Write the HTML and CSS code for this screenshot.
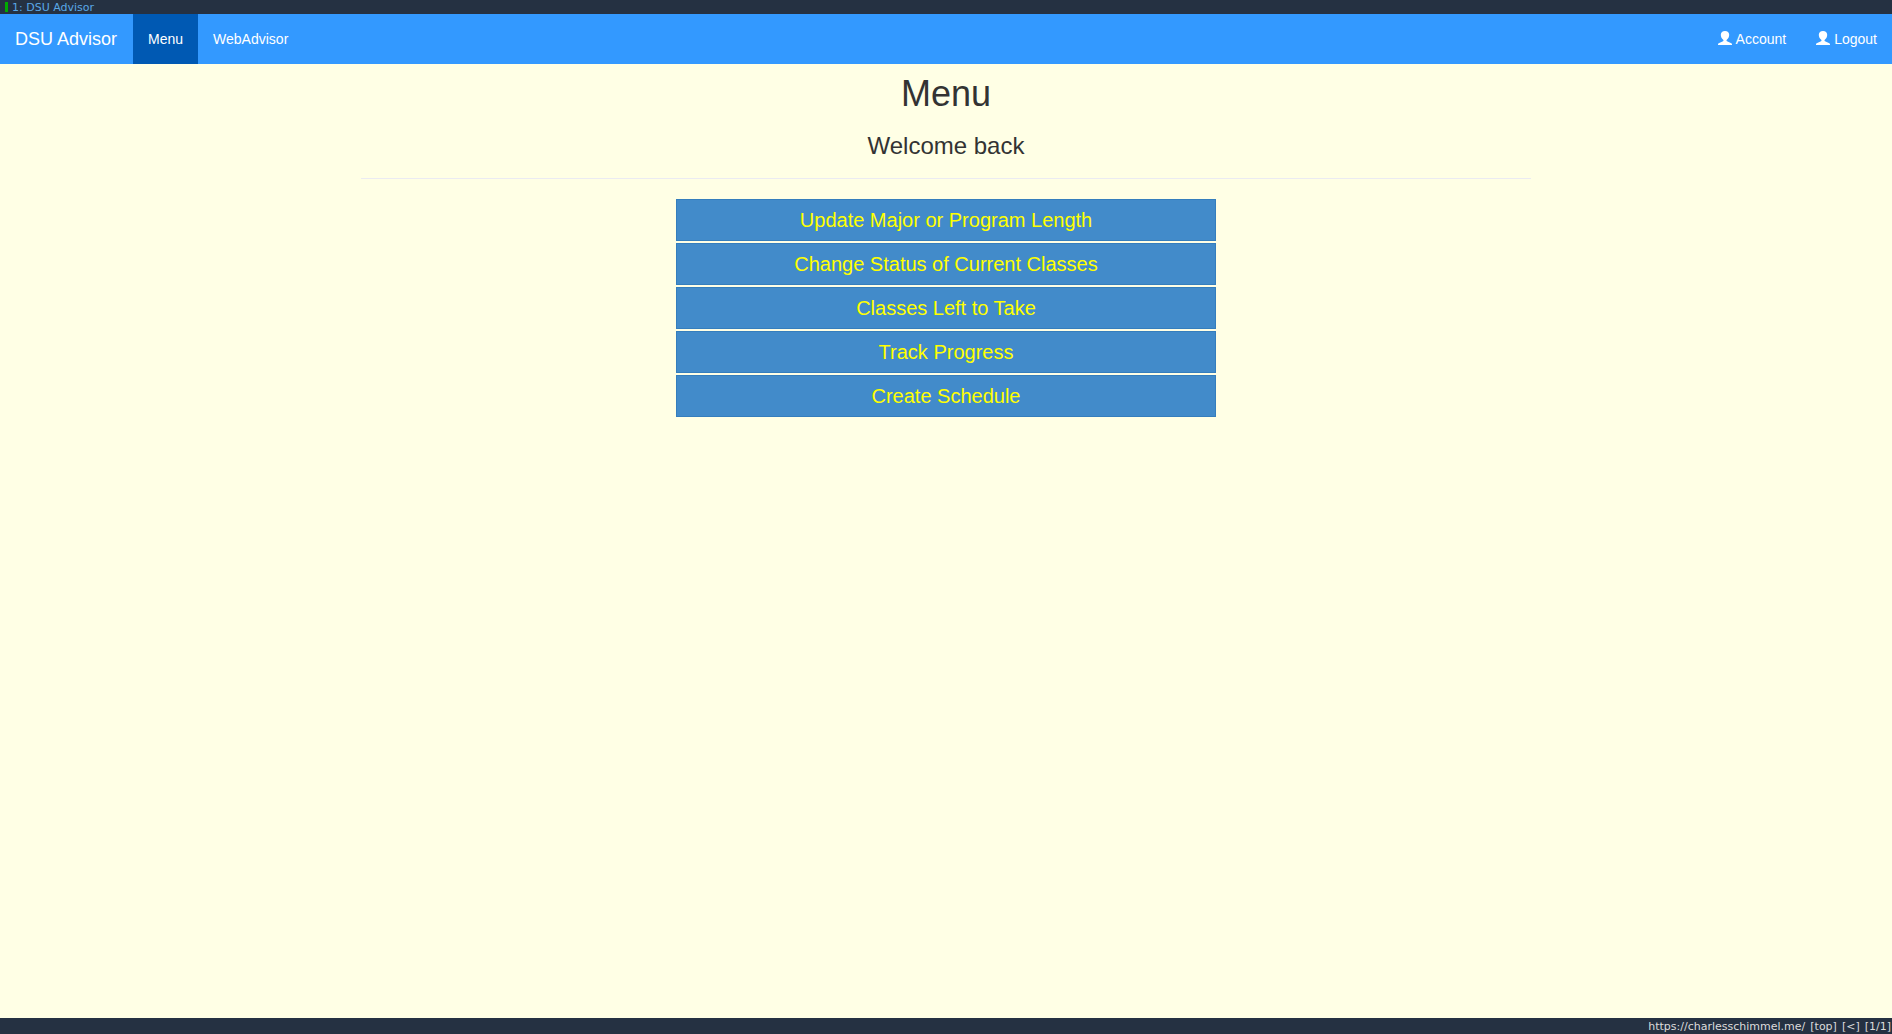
FILE: index.html
```html
<!DOCTYPE html>
<html lang="en">
<head>
<meta charset="utf-8">
<meta name="viewport" content="width=device-width, initial-scale=1">
<title>DSU Advisor</title>
<link rel="stylesheet" href="styles.css">
</head>
<body>
<div class="tab-bar"><span class="tab-indicator"></span><span>1: DSU Advisor</span></div>
<nav class="navbar">
  <a class="brand" href="#">DSU Advisor</a>
  <a class="nav-link active" href="#" aria-current="page">Menu</a>
  <a class="nav-link" href="#">WebAdvisor</a>
  <div class="nav-right">
    <a class="nav-link" href="#"><svg class="icon" viewBox="0 0 14 14" aria-hidden="true"><path d="M7 0C4.500 0 2.800 1.500 2.800 3.700c0 2 1 4 2.400 5.100.5.500.4 1.200-.2 1.500L1.200 11.900C.4 12.200 0 12.700 0 13.300V14h14v-.7c0-.6-.4-1.100-1.200-1.400L9 10.300c-.6-.3-.7-1-.2-1.500 1.400-1.100 2.400-3.100 2.400-5.100C11.200 1.500 9.500 0 7 0z"/></svg>Account</a>
    <a class="nav-link" href="#"><svg class="icon" viewBox="0 0 14 14" aria-hidden="true"><path d="M7 0C4.500 0 2.800 1.500 2.800 3.700c0 2 1 4 2.400 5.100.5.500.4 1.200-.2 1.500L1.200 11.900C.4 12.200 0 12.700 0 13.300V14h14v-.7c0-.6-.4-1.100-1.200-1.400L9 10.300c-.6-.3-.7-1-.2-1.500 1.400-1.100 2.400-3.100 2.400-5.100C11.200 1.500 9.500 0 7 0z"/></svg>Logout</a>
  </div>
</nav>
<main class="container">
  <h1>Menu</h1>
  <h3>Welcome back</h3>
  <hr>
  <div class="menu">
    <button class="menu-button" type="button">Update Major or Program Length</button>
    <button class="menu-button" type="button">Change Status of Current Classes</button>
    <button class="menu-button" type="button">Classes Left to Take</button>
    <button class="menu-button" type="button">Track Progress</button>
    <button class="menu-button" type="button">Create Schedule</button>
  </div>
</main>
<footer class="status-bar"><span>https://charlesschimmel.me/</span><span>[top]</span><span>[&lt;]</span><span>[1/1]</span></footer>
</body>
</html>
```
FILE: styles.css
```css
* {
  box-sizing: border-box;
}

body {
  display: flex;
  flex-direction: column;
  min-height: 100vh;
  margin: 0;
  background: #ffffe5;
  color: #333;
  font: 14px/20px "Liberation Sans", Arial, sans-serif;
}

.tab-bar,
.status-bar {
  display: flex;
  background: #253142;
  font: 11px/14px "DejaVu Sans", sans-serif;
}

.tab-bar {
  align-items: flex-start;
  gap: 4px;
  padding: 1px 0 0 5px;
  color: #5aa8e6;
  line-height: 13px;
}

.tab-indicator {
  width: 3px;
  height: 10px;
  margin-top: 1px;
  background: #00aa00;
}

.status-bar {
  justify-content: flex-end;
  gap: 5px;
  padding: 2px 1px 0 0;
  color: #dcdcdc;
}

.navbar {
  display: flex;
  background: #3399ff;
}

.brand,
.nav-link {
  display: flex;
  align-items: center;
  padding: 15px;
  color: #fff;
  text-decoration: none;
}

.brand {
  padding-right: 16px;
  font-size: 18px;
}

.active {
  background: #0059b3;
}

.nav-right {
  display: flex;
  margin-left: auto;
}

.icon {
  width: 14px;
  height: 14px;
  margin-right: 4px;
  margin-bottom: 2px;
  fill: currentColor;
}

.container {
  flex: 1;
  width: 100%;
  max-width: 1170px;
  margin: 0 auto;
  padding-top: 10px;
  text-align: center;
}

h1,
h3 {
  margin: 0;
  font-weight: 500;
}

h1 {
  font-size: 36px;
  line-height: 40px;
}

h3 {
  margin-top: 18px;
  font-size: 24px;
  line-height: 28px;
}

hr {
  margin: 18px 0 20px;
  border: 0;
  border-top: 1px solid #ebebf2;
}

.menu {
  display: flex;
  flex-direction: column;
  gap: 2px;
  width: 100%;
  max-width: 540px;
  margin: 0 auto;
}

.menu-button {
  padding: 8px 12px;
  border: 1px solid #357ebd;
  background: #428bca;
  color: #ff0;
  font: 20px/24px "Liberation Sans", Arial, sans-serif;
  cursor: pointer;
}
```
